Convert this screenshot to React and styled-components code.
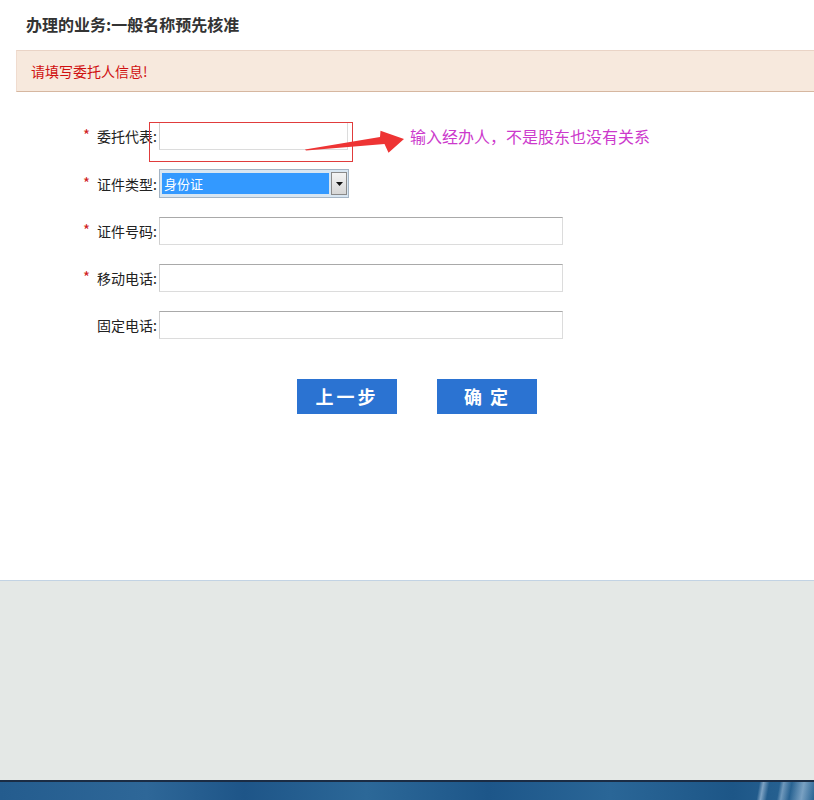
import React from "react";
import styled, { createGlobalStyle } from "styled-components";

const Global = createGlobalStyle`
  html, body { margin: 0; padding: 0; background: #fff; }
  body { font-family: "Noto Sans CJK SC", "Noto Sans", sans-serif; color: #222; }
`;

const Page = styled.div`
  width: 814px;
  height: 800px;
  display: flex;
  flex-direction: column;
  overflow: hidden;
`;

const Main = styled.div`
  height: 580px;
  background: #fff;
  display: flex;
  flex-direction: column;
`;

const Title = styled.h1`
  margin: 0;
  height: 50px;
  padding-left: 26px;
  font-size: 16px;
  font-weight: bold;
  line-height: 48px;
  color: #333;
`;

const Alert = styled.div`
  margin-left: 16px;
  height: 40px;
  background: #f7e9dd;
  border-top: 1px solid #ead4c6;
  border-bottom: 1px solid #d6b7a0;
  border-left: 1px solid #f0dccf;
  padding-left: 14px;
  display: flex;
  align-items: center;
  font-size: 14px;
  color: #d01010;
`;

const Form = styled.div`
  position: relative;
  padding-top: 30px;
  display: flex;
  flex-direction: column;
  gap: 19px;
`;

const Row = styled.div`
  position: relative;
  display: flex;
  align-items: center;
  padding-left: 83px;
`;

const Star = styled.span`
  width: 12px;
  font-size: 15px;
  line-height: 14px;
  color: #d02020;
  margin-top: -2px;
`;

const Label = styled.label`
  width: 62px;
  padding-right: 2px;
  text-align: right;
  font-size: 14px;
  color: #222;
  white-space: nowrap;
`;

const Input = styled.div`
  box-sizing: border-box;
  width: ${(p) => p.$w}px;
  height: 28px;
  background: #fff;
  border: 1px solid #dcdcdc;
  border-top-color: #a9a9a9;
  border-left-color: #cfcfcf;
`;

const Select = styled.div`
  box-sizing: border-box;
  width: 190px;
  height: 29px;
  border: 1px solid #a4b4c4;
  background: #d8e6f2;
  padding: 2px 1px 2px 2px;
  display: flex;
  gap: 2px;
`;

const SelectValue = styled.div`
  flex: 1;
  background: #3399ff;
  color: #fff;
  font-size: 13px;
  display: flex;
  align-items: center;
  padding-left: 2px;
  margin: 1px 0;
`;

const SelectButton = styled.div`
  box-sizing: border-box;
  width: 16px;
  border: 1px solid #8a8a8a;
  background: linear-gradient(#f4f4f4, #d6d6d6);
  display: flex;
  align-items: center;
  justify-content: center;
`;

const Actions = styled.div`
  display: flex;
  gap: 40px;
  padding-left: 297px;
  margin-top: 21px;
`;

const Button = styled.button`
  width: 100px;
  height: 35px;
  border: 0;
  background: #2b73d2;
  color: #fff;
  font-family: "Noto Sans CJK SC", sans-serif;
  font-size: 18px;
  font-weight: bold;
  letter-spacing: ${(p) => p.$ls || 2}px;
  padding: 0 0 2px;
  cursor: pointer;
`;

const Highlight = styled.div`
  position: absolute;
  left: 149px;
  top: 0;
  width: 204px;
  height: 40px;
  box-sizing: border-box;
  border: 1px solid #e03c3c;
  pointer-events: none;
`;

const ArrowSvg = styled.svg`
  position: absolute;
  left: 300px;
  top: -8px;
`;

const Note = styled.span`
  position: absolute;
  left: 410px;
  top: 2px;
  font-size: 16px;
  color: #cc3acc;
  white-space: nowrap;
`;

const Footer = styled.div`
  flex: 1;
  background: #e4e8e6;
  border-top: 1px solid #c2d3e4;
`;

const Taskbar = styled.div`
  height: 18px;
  border-top: 2px solid #1b2c44;
  background:
    linear-gradient(100deg, transparent 0 748px, rgba(200,220,240,0.55) 752px, transparent 758px, transparent 768px, rgba(200,220,240,0.45) 772px, transparent 780px, rgba(200,220,240,0.5) 792px, transparent 804px),
    linear-gradient(90deg, #245c8e 0%, #2e6798 18%, #1e5588 30%, #2c6898 45%, #1d5689 60%, #2a6697 75%, #1d5687 90%, #2c6796 100%);
`;

const fields = [
  { label: "证件号码:", req: true },
  { label: "移动电话:", req: true },
  { label: "固定电话:", req: false },
];

export default function App() {
  return (
    <Page>
      <Global />
      <Main>
        <Title>办理的业务:一般名称预先核准</Title>
        <Alert>请填写委托人信息!</Alert>
        <Form>
          <Row>
            <Star>*</Star>
            <Label>委托代表:</Label>
            <Input $w={189} />
            <Highlight />
            <ArrowSvg width="110" height="40" viewBox="0 0 110 40">
              <polygon points="5,43.5 80,31 80.5,24.8 104,33 88.5,46.7 84.5,38 6,44.5" fill="#ee3434" transform="translate(0,-8)" />
            </ArrowSvg>
            <Note>输入经办人，不是股东也没有关系</Note>
          </Row>
          <Row>
            <Star>*</Star>
            <Label>证件类型:</Label>
            <Select>
              <SelectValue>身份证</SelectValue>
              <SelectButton>
                <svg width="7" height="4" viewBox="0 0 7 4">
                  <polygon points="0,0 7,0 3.5,4" fill="#111" />
                </svg>
              </SelectButton>
            </Select>
          </Row>
          {fields.map((f) => (
            <Row key={f.label}>
              <Star>{f.req ? "*" : ""}</Star>
              <Label>{f.label}</Label>
              <Input $w={404} />
            </Row>
          ))}
          <Actions>
            <Button $ls={3}>上一步</Button>
            <Button $ls={2}>确 定</Button>
          </Actions>
        </Form>
      </Main>
      <Footer />
      <Taskbar />
    </Page>
  );
}
